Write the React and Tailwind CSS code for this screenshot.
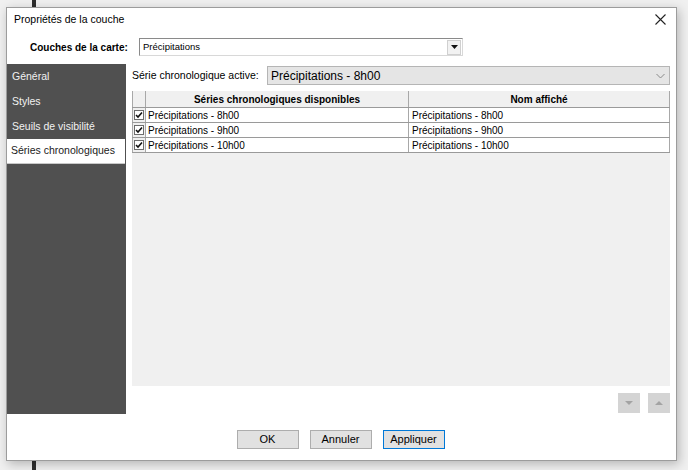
import React from "react";

const rows = ["Précipitations - 8h00", "Précipitations - 9h00", "Précipitations - 10h00"];
const menu = ["Général", "Styles", "Seuils de visibilité", "Séries chronologiques"];

const Check = () => (
    <div className="w-[10px] h-[10px] border border-[#6d6d6d] bg-white flex items-center justify-center">
        <svg width="8" height="8" viewBox="0 0 8 8">
            <path d="M1 4 L3 6 L7 1.5" fill="none" stroke="#111" strokeWidth="1.6" />
        </svg>
    </div>
);

export default function App() {
    return (
        <div className="relative w-[688px] h-[470px] bg-[#f0f0f0] overflow-hidden font-['Liberation_Sans',Arial,sans-serif] text-black">
            {/* trait sombre derrière la fenêtre */}
            <div className="absolute left-[32px] top-0 w-[4px] h-full bg-[#2e2e2e]"></div>

            <div className="relative ml-[6px] mt-[7px] w-[671px] h-[454px] bg-white border border-[#9c9c9c] shadow-[2px_3px_10px_rgba(0,0,0,0.25)] flex flex-col">
                {/* Titre */}
                <div className="h-[22px] flex items-center justify-between pl-[7px] pr-[10px] pt-[1px]">
                    <span className="text-[10.5px]">Propriétés de la couche</span>
                    <svg width="11" height="11" viewBox="0 0 11 11">
                        <path d="M0.5 0.5 L10.5 10.5 M10.5 0.5 L0.5 10.5" stroke="#222" strokeWidth="1.1" />
                    </svg>
                </div>

                {/* Couches de la carte */}
                <div className="h-[34px] flex items-center pl-[23px]">
                    <span className="text-[10px] font-bold w-[109px]">Couches de la carte:</span>
                    <div className="w-[324px] h-[18px] flex items-center border border-[#8a8a8a] border-b-[#d8d8d8] border-r-[#d8d8d8] bg-white">
                        <span className="flex-1 pl-[3px] text-[9.5px]">Précipitations</span>
                        <div className="w-[14px] h-[15px] mr-[1px] bg-[#f2f2f2] border border-[#d0d0d0] flex items-center justify-center">
                            <svg width="7" height="4" viewBox="0 0 7 4">
                                <path d="M0 0 H7 L3.5 4 Z" fill="#111" />
                            </svg>
                        </div>
                    </div>
                </div>

                {/* Corps */}
                <div className="flex h-[350px]">
                    <div className="w-[119px] bg-[#505050] flex flex-col">
                        {menu.map((m, i) => (
                            <div
                                key={m}
                                className={
                                    i === 3
                                        ? "h-[25px] flex items-center pl-[4px] bg-white text-[10.5px] text-[#1a1a1a] border-b border-[#c8c8c8] mr-[1px]"
                                        : "h-[25px] flex items-center pl-[5px] text-[10.5px] text-[#f2f2f2]"
                                }
                            >
                                {m}
                            </div>
                        ))}
                    </div>

                    <div className="w-[538px] ml-[6px] flex flex-col">
                        <div className="flex items-center mt-[2px] h-[19px]">
                            <span className="text-[10.5px] w-[135px]">Série chronologique active:</span>
                            <div className="flex-1 h-[19px] bg-[#e5e5e5] border border-[#b5b5b5] flex items-center justify-between pl-[3px] pr-[4px]">
                                <span className="text-[12px]">Précipitations - 8h00</span>
                                <svg width="9" height="6" viewBox="0 0 9 6">
                                    <path d="M0.5 1 L4.5 5 L8.5 1" fill="none" stroke="#8a8a8a" strokeWidth="1" />
                                </svg>
                            </div>
                        </div>

                        {/* Tableau */}
                        <div className="mt-[6px] h-[295px] bg-[#f0f0f0]">
                            <div className="flex h-[17px] border-b border-[#9a9a9a] text-[10px] font-bold">
                                <div className="w-[14px] border-l border-r border-[#a8a8a8]"></div>
                                <div className="w-[263px] flex items-center justify-center border-r border-[#a8a8a8]">Séries chronologiques disponibles</div>
                                <div className="w-[261px] flex items-center justify-center border-r border-[#a8a8a8]">Nom affiché</div>
                            </div>
                            {rows.map((r) => (
                                <div key={r} className="flex h-[15px] border-b border-[#9a9a9a] text-[10px] bg-white">
                                    <div className="w-[14px] flex items-center justify-center border-l border-r border-[#a8a8a8] bg-[#f0f0f0]">
                                        <Check />
                                    </div>
                                    <div className="w-[263px] flex items-center pl-[2px] border-r border-[#a8a8a8]">{r}</div>
                                    <div className="w-[261px] flex items-center pl-[3px] border-r border-[#a8a8a8]">{r}</div>
                                </div>
                            ))}
                        </div>

                        <div className="flex justify-end gap-[8px] mt-[7px]">
                            <div className="w-[22px] h-[20px] bg-[#d4d4d4] flex items-center justify-center">
                                <svg width="8" height="4" viewBox="0 0 8 4">
                                    <path d="M0 0 H8 L4 4 Z" fill="#a3a3a3" />
                                </svg>
                            </div>
                            <div className="w-[22px] h-[20px] bg-[#d4d4d4] flex items-center justify-center">
                                <svg width="8" height="4" viewBox="0 0 8 4">
                                    <path d="M0 4 H8 L4 0 Z" fill="#a3a3a3" />
                                </svg>
                            </div>
                        </div>
                    </div>
                </div>

                {/* Boutons */}
                <div className="flex justify-center gap-[11px] mt-[16px] pr-[2px]">
                    <button className="w-[62px] h-[19px] bg-[#e1e1e1] border border-[#adadad] text-[11px]">OK</button>
                    <button className="w-[62px] h-[19px] bg-[#e1e1e1] border border-[#adadad] text-[11px]">Annuler</button>
                    <button className="w-[62px] h-[19px] bg-[#e1e1e1] border border-[#0078d7] text-[11px]">Appliquer</button>
                </div>
            </div>
        </div>
    );
}
